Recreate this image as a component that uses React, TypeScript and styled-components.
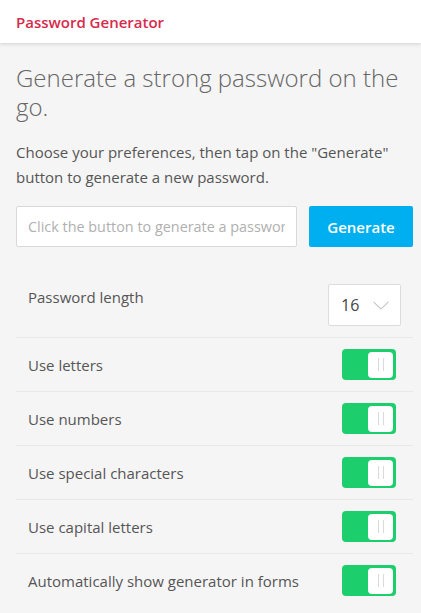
import React from "react";
import styled, { createGlobalStyle } from "styled-components";

const Global = createGlobalStyle`
  html, body { margin: 0; padding: 0; background: #f5f5f5; }
  body { font-family: "Open Sans", "Noto Sans", sans-serif; -webkit-font-smoothing: antialiased; }
  * { box-sizing: border-box; }
`;

const Header = styled.header`
  height: 43px;
  background: #ffffff;
  box-shadow: 0 1px 4px rgba(0, 0, 0, 0.16);
  display: flex;
  align-items: center;
  padding-left: 16px;
  position: relative;
  z-index: 1;
`;

const Title = styled.div`
  color: #d72a4b;
  font-size: 15px;
  font-weight: 600;
`;

const Main = styled.main`
  padding: 0 8px 0 16px;
`;

const Heading = styled.h1`
  margin: 20px 0 0;
  font-size: 24px;
  line-height: 29px;
  font-weight: 300;
  color: #666666;
`;

const Intro = styled.p`
  margin: 19px 0 0;
  font-size: 15px;
  line-height: 25px;
  color: #555555;
`;

const GenRow = styled.div`
  display: flex;
  gap: 12px;
  margin-top: 16px;
  height: 41px;
`;

const Field = styled.input`
  flex: 1;
  min-width: 0;
  height: 41px;
  border: 1px solid #d9d9d9;
  border-radius: 2px;
  background: #fff;
  padding: 0 11px;
  font-family: inherit;
  font-size: 14.4px;
  color: #555;
  outline: none;
  &::placeholder { color: #b0b0b0; }
`;

const GenButton = styled.button`
  width: 104px;
  height: 41px;
  border: none;
  border-radius: 2px;
  background: #00aff0;
  color: #fff;
  font-family: inherit;
  font-size: 15px;
  font-weight: 600;
  cursor: pointer;
`;

const List = styled.div`
  margin-top: 27px;
`;

const Row = styled.div<{ $first?: boolean }>`
  display: flex;
  justify-content: space-between;
  align-items: ${(p) => (p.$first ? "flex-start" : "center")};
  padding: ${(p) => (p.$first ? "10px 12px 11px 12px" : "0 17px 0 12px")};
  height: ${(p) => (p.$first ? "63px" : "54px")};
  border-top: ${(p) => (p.$first ? "none" : "1px solid #e8e8e8")};
`;

const Label = styled.span<{ $first?: boolean }>`
  font-size: 15px;
  line-height: 20px;
  color: #555555;
  margin-top: ${(p) => (p.$first ? "3px" : "0")};
`;

const SelectBox = styled.div`
  width: 73px;
  height: 42px;
  background: #fff;
  border: 1px solid #dcdcdc;
  border-radius: 2px;
  display: flex;
  align-items: center;
  padding-left: 12px;
  gap: 14px;
  font-size: 16px;
  color: #444;
`;

const Toggle = styled.div<{ $on: boolean }>`
  width: 54px;
  height: 31px;
  border-radius: 4px;
  background: ${(p) => (p.$on ? "#1cce6c" : "#ccc")};
  display: flex;
  align-items: center;
  justify-content: ${(p) => (p.$on ? "flex-end" : "flex-start")};
  padding: 0 3px;
`;

const Knob = styled.div`
  width: 25px;
  height: 26px;
  border-radius: 4px;
  background: #fff;
  display: flex;
  align-items: center;
  justify-content: center;
  gap: 4px;
`;

const Grip = styled.span`
  width: 1px;
  height: 13px;
  background: #dadada;
`;

const Chevron = () => (
  <svg width="16" height="9" viewBox="0 0 16 9" fill="none">
    <path d="M0.5 0.8 L8 8 L15.5 0.8" stroke="#c8c8c8" strokeWidth="1.1" />
  </svg>
);

const options = [
  "Use letters",
  "Use numbers",
  "Use special characters",
  "Use capital letters",
  "Automatically show generator in forms",
];

export default function App() {
  return (
    <>
      <Global />
      <Header>
        <Title>Password Generator</Title>
      </Header>
      <Main>
        <Heading>Generate a strong password on the go.</Heading>
        <Intro>
          Choose your preferences, then tap on the "Generate" button to generate a new password.
        </Intro>
        <GenRow>
          <Field placeholder="Click the button to generate a password" readOnly />
          <GenButton>Generate</GenButton>
        </GenRow>
        <List>
          <Row $first>
            <Label $first>Password length</Label>
            <SelectBox>
              16
              <Chevron />
            </SelectBox>
          </Row>
          {options.map((o) => (
            <Row key={o}>
              <Label>{o}</Label>
              <Toggle $on>
                <Knob>
                  <Grip />
                  <Grip />
                </Knob>
              </Toggle>
            </Row>
          ))}
        </List>
      </Main>
    </>
  );
}
